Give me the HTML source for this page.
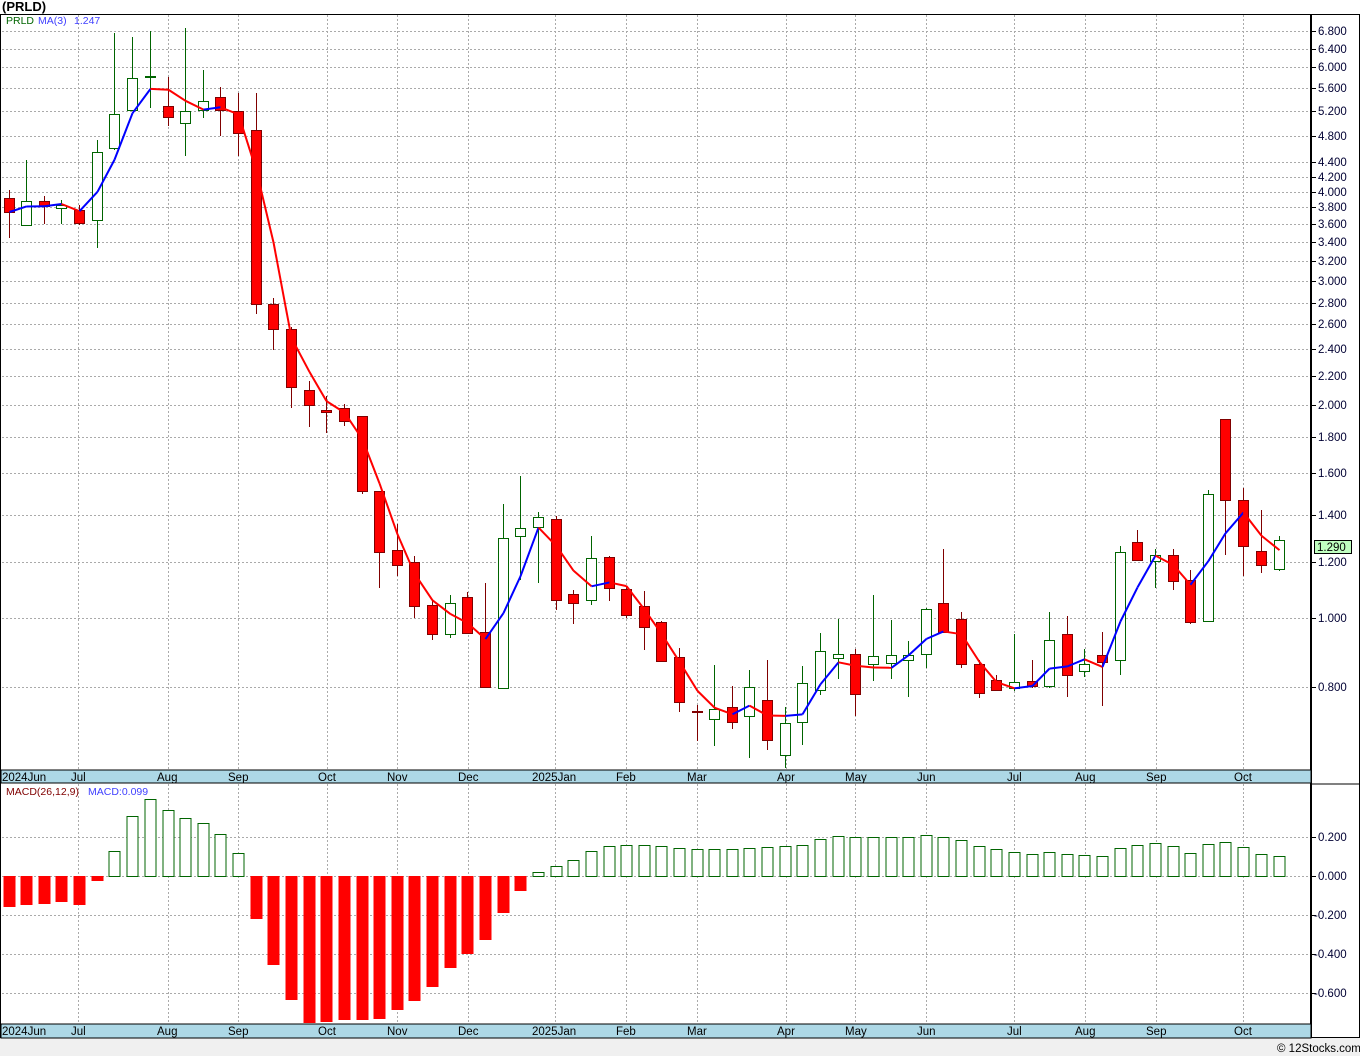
<!DOCTYPE html>
<html><head><meta charset="utf-8">
<style>
html,body{margin:0;padding:0;background:#fff;}
body{width:1360px;height:1056px;overflow:hidden;position:relative;font-family:"Liberation Sans",sans-serif;}
svg text{font-family:"Liberation Sans",sans-serif;font-size:11.5px;}
</style></head><body>
<svg id="c" width="1360" height="1056" xmlns="http://www.w3.org/2000/svg" style="position:absolute;left:0;top:0">
<rect x="0" y="1038" width="1360" height="18" fill="#f0f0f0"/>
<text x="2" y="11" style="font-size:13px;font-weight:bold">(PRLD)</text>
<g id="grid" stroke="#aaa" stroke-dasharray="2,2" stroke-width="1"></g>
<g id="cand"></g>
<g id="macd"></g>
<g id="ma"></g>
<rect x="0.5" y="14.5" width="1359" height="1023" fill="none" stroke="#000"/>
<line x1="1311" y1="14" x2="1311" y2="1038" stroke="#000" stroke-width="2"/>
<rect x="1" y="770" width="1310" height="13" fill="#add8e6" stroke="#000"/>
<rect x="1" y="1024" width="1310" height="14" fill="#add8e6" stroke="#000"/>
<line x1="1311" y1="784" x2="1360" y2="784" stroke="#000"/>
<g id="ticks" stroke="#000"></g>
<text x="6" y="24" fill="#006400" style="font-size:10.5px">PRLD</text>
<text x="38" y="24" fill="#4040ff" style="font-size:10.5px">MA(3)</text>
<text x="74" y="24" fill="#4040ff" style="font-size:10.5px">1.247</text>
<text x="6" y="795" fill="#800000" style="font-size:10.5px">MACD(26,12,9)</text>
<text x="88" y="795" fill="#4040ff" style="font-size:10.5px">MACD:0.099</text>
<g fill="#000033">
<text x="1318" y="35">6.800</text><text x="1318" y="53">6.400</text><text x="1318" y="71">6.000</text>
<text x="1318" y="92">5.600</text><text x="1318" y="115">5.200</text><text x="1318" y="140">4.800</text>
<text x="1318" y="166">4.400</text><text x="1318" y="181">4.200</text><text x="1318" y="196">4.000</text>
<text x="1318" y="211">3.800</text><text x="1318" y="228">3.600</text><text x="1318" y="246">3.400</text>
<text x="1318" y="265">3.200</text><text x="1318" y="285">3.000</text><text x="1318" y="307">2.800</text>
<text x="1318" y="328">2.600</text><text x="1318" y="353">2.400</text><text x="1318" y="380">2.200</text>
<text x="1318" y="409">2.000</text><text x="1318" y="441">1.800</text><text x="1318" y="477">1.600</text>
<text x="1318" y="519">1.400</text><text x="1318" y="566">1.200</text><text x="1318" y="622">1.000</text>
<text x="1318" y="691">0.800</text>
<text x="1318" y="841">0.200</text><text x="1318" y="880">0.000</text><text x="1314" y="919">-0.200</text>
<text x="1314" y="958">-0.400</text><text x="1314" y="997">-0.600</text>
</g>
<rect x="1314.5" y="540.5" width="37" height="13" fill="#c0ffc0" stroke="#000"/>
<text x="1317" y="551">1.290</text>
<g fill="#000">
<text x="2" y="781">2024Jun</text><text x="71" y="781">Jul</text><text x="157" y="781">Aug</text><text x="228" y="781">Sep</text><text x="318" y="781">Oct</text><text x="387" y="781">Nov</text><text x="458" y="781">Dec</text><text x="532" y="781">2025Jan</text><text x="616" y="781">Feb</text><text x="687" y="781">Mar</text><text x="777" y="781">Apr</text><text x="845" y="781">May</text><text x="917" y="781">Jun</text><text x="1007" y="781">Jul</text><text x="1075" y="781">Aug</text><text x="1146" y="781">Sep</text><text x="1234" y="781">Oct</text>
<text x="2" y="1035">2024Jun</text><text x="71" y="1035">Jul</text><text x="157" y="1035">Aug</text><text x="228" y="1035">Sep</text><text x="318" y="1035">Oct</text><text x="387" y="1035">Nov</text><text x="458" y="1035">Dec</text><text x="532" y="1035">2025Jan</text><text x="616" y="1035">Feb</text><text x="687" y="1035">Mar</text><text x="777" y="1035">Apr</text><text x="845" y="1035">May</text><text x="917" y="1035">Jun</text><text x="1007" y="1035">Jul</text><text x="1075" y="1035">Aug</text><text x="1146" y="1035">Sep</text><text x="1234" y="1035">Oct</text>
</g>
<text x="1277" y="1052" style="font-size:11.5px">© 12Stocks.com</text>
</svg>
<script>
var NS="http://www.w3.org/2000/svg";
function el(p,t,a){var e=document.createElementNS(NS,t);for(var k in a)e.setAttribute(k,a[k]);document.getElementById(p).appendChild(e);return e;}
var mx=[78,168,238,327,397,468,555,626,697,786,855,926,1014,1085,1156,1243];
mx.forEach(function(x){el("grid","line",{x1:x+.5,y1:15,x2:x+.5,y2:770});el("grid","line",{x1:x+.5,y1:784,x2:x+.5,y2:1024});});
var py=[31,49,67,88,111,136,162,177,192,207,224,242,261,281,303,324,349,376,405,437,473,515,562,618,687];
py.forEach(function(y){el("grid","line",{x1:2,y1:y+.5,x2:1311,y2:y+.5});el("ticks","line",{x1:1311,y1:y+.5,x2:1316,y2:y+.5});});
[837,876,915,954,993].forEach(function(y){el("grid","line",{x1:2,y1:y+.5,x2:1311,y2:y+.5});el("ticks","line",{x1:1311,y1:y+.5,x2:1316,y2:y+.5});});
var C=[[9,198,212,190,238,0],[26,201,225,160,225,1],[44,201,206,196,224,0],[61,205,208,200,224,1],[79,210,223,205,225,0],[97,152,220,140,248,1],[114,114,148,33,150,1],[132,78,110,37,110,1],[150,76,77,31,108,1],[168,106,117,77,126,0],[185,111,123,28,156,1],[203,101,110,70,118,1],[220,97,110,87,136,0],[238,111,133,93,156,0],[256,130,304,93,314,0],[273,304,329,298,350,0],[291,329,387,327,408,0],[309,390,405,381,427,0],[326,410,412,396,433,0],[344,408,421,404,426,0],[362,416,491,416,494,0],[379,491,552,491,588,0],[397,550,565,524,576,0],[414,562,606,556,618,0],[432,605,634,600,640,0],[450,603,634,595,638,1],[467,597,633,592,634,0],[485,632,687,583,687,0],[503,538,688,504,688,1],[520,528,536,476,580,1],[538,517,527,512,583,1],[556,519,600,516,610,0],[573,594,603,590,624,0],[591,558,600,536,605,1],[609,557,588,556,601,0],[626,589,615,586,618,0],[644,606,627,591,650,0],[661,622,661,621,662,0],[679,657,702,648,712,0],[697,711,712,705,741,0],[714,709,719,665,746,1],[732,707,722,686,729,0],[749,687,716,670,758,1],[767,700,740,660,750,0],[785,723,755,707,768,1],[802,683,722,666,745,1],[820,651,690,633,695,1],[838,654,658,619,679,1],[855,654,694,649,716,0],[873,656,664,595,681,1],[891,655,663,620,679,1],[908,655,660,641,697,1],[926,609,654,608,668,1],[943,603,632,549,632,0],[961,619,664,612,668,0],[979,664,693,660,698,0],[996,680,690,675,690,0],[1014,682,688,634,691,1],[1032,681,686,660,688,0],[1049,640,686,612,688,1],[1067,634,675,616,697,0],[1084,664,671,649,677,1],[1102,655,662,632,706,0],[1120,552,660,546,675,1],[1137,542,560,530,560,0],[1155,555,561,549,588,1],[1173,555,581,549,590,0],[1190,580,622,570,624,0],[1208,494,621,490,621,1],[1225,419,500,419,555,0],[1243,500,546,488,576,0],[1261,551,565,510,573,0],[1279,540,569,536,571,1]];
var closes=[];
C.forEach(function(c){
 var col=c[5]?"#006400":"#800000";
 el("cand","line",{x1:c[0]+.5,y1:c[3],x2:c[0]+.5,y2:c[4],stroke:col});
 var h=Math.max(c[2]-c[1],1);
 el("cand","rect",{x:c[0]-4.5,y:c[1]+.5,width:10,height:h,fill:c[5]?"#fff":"#ff0000",stroke:col});
 var cy=c[5]?c[1]:c[2];closes.push(Math.exp((618-cy)/307.4));
});
var prev=null;
for(var i=0;i<C.length;i++){
 var s=0,n=0;for(var j=Math.max(0,i-2);j<=i;j++){s+=closes[j];n++;}
 var y=618-307.4*Math.log(s/n),p=[C[i][0]+.5,y];
 if(prev){el("ma","line",{x1:prev[0],y1:prev[1],x2:p[0],y2:p[1],stroke:(p[1]<prev[1]?"#0000ff":"#ff0000"),"stroke-width":2});}
 prev=p;
}
var M=[907,905,904,902,905,881,851,816,799,810,818,823,834,853,919,965,1000,1023,1022,1020,1020,1019,1010,1001,987,968,954,940,913,891,872,866,860,851,846,845,845,846,848,849,849,849,848,847,846,845,839,836,837,837,837,837,835,837,840,846,849,852,854,852,854,855,856,848,845,843,846,853,844,842,847,854,856];
M.forEach(function(v,i){
 var x=C[i][0];
 if(v>876) el("macd","rect",{x:x-5.5,y:876,width:12,height:v-876,fill:"#ff0000"});
 else el("macd","rect",{x:x-5,y:v+.5,width:11,height:876-v,fill:"#fff",stroke:"#006400"});
});
</script>
</body></html>
